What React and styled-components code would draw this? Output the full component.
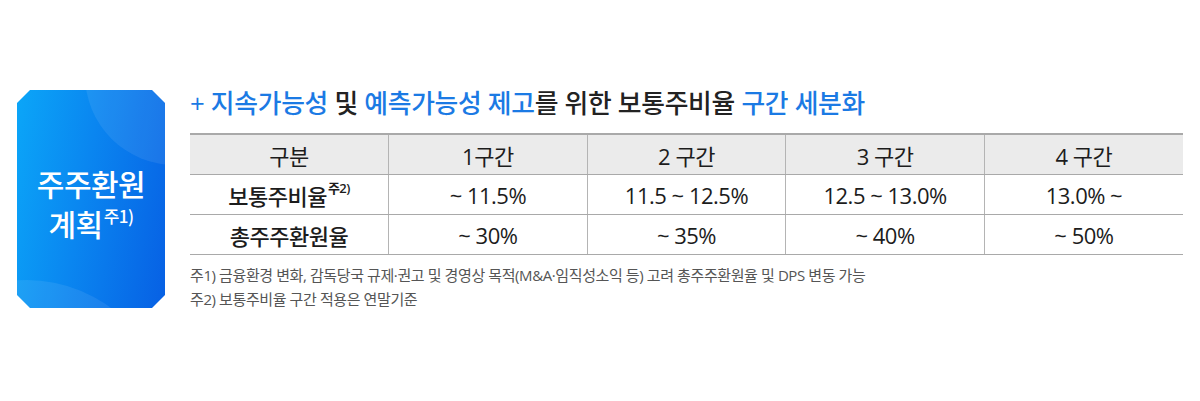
import React from "react";
import styled, { createGlobalStyle } from "styled-components";

const GlobalStyle = createGlobalStyle`
  body {
    margin: 0;
    background: #ffffff;
    font-family: "Open Sans", "Noto Sans CJK KR", sans-serif;
  }
`;

const Page = styled.div`
  width: 1200px;
  height: 401px;
  display: flex;
  align-items: flex-start;
  gap: 25px;
  padding: 88px 0 0 17px;
  box-sizing: border-box;
`;

const Badge = styled.div`
  position: relative;
  overflow: hidden;
  width: 148px;
  height: 218px;
  margin-top: 2px;
  flex-shrink: 0;
  display: flex;
  flex-direction: column;
  align-items: center;
  justify-content: center;
  padding-top: 8px;
  box-sizing: border-box;
  background: linear-gradient(100deg, #0ba6f8 0%, #0a86f0 45%, #0760e4 100%);
  clip-path: polygon(13px 0, calc(100% - 13px) 0, 100% 13px, 100% calc(100% - 13px), calc(100% - 13px) 100%, 13px 100%, 0 calc(100% - 13px), 0 13px);
  color: #fff;

  &::before {
    content: "";
    position: absolute;
    width: 180px;
    height: 180px;
    border-radius: 50%;
    left: 68px;
    top: -105px;
    background: rgba(255, 255, 255, 0.08);
  }

  &::after {
    content: "";
    position: absolute;
    width: 280px;
    height: 280px;
    border-radius: 50%;
    left: -130px;
    top: 190px;
    background: rgba(255, 255, 255, 0.08);
  }
`;

const BadgeLine = styled.div`
  position: relative;
  z-index: 1;
  font-family: "Noto Sans CJK KR", sans-serif;
  font-size: 30px;
  font-weight: 500;
  line-height: 40px;
  letter-spacing: -0.5px;
  white-space: nowrap;
`;

const Sup = styled.span`
  display: inline-block;
  font-size: ${(p) => p.$size}px;
  font-weight: ${(p) => p.$weight || 500};
  line-height: ${(p) => p.$size}px;
  vertical-align: top;
  position: relative;
  top: ${(p) => p.$lift}px;
  margin-left: 1px;
  letter-spacing: -0.5px;
`;

const Panel = styled.div`
  display: flex;
  flex-direction: column;
  width: 993px;
`;

const Title = styled.h2`
  margin: 0;
  height: 30px;
  line-height: 30px;
  font-size: 25.8px;
  font-weight: 500;
  color: #222;
  letter-spacing: -0.3px;
  white-space: nowrap;
`;

const Blue = styled.span`
  color: #1b7ae4;
`;

const Table = styled.table`
  margin-top: 15px;
  width: 100%;
  border-collapse: collapse;
  table-layout: fixed;
  border-top: 2px solid #a9a9a9;
`;

const Cell = styled.td`
  height: 39px;
  padding: 0;
  text-align: center;
  vertical-align: middle;
  font-size: 22px;
  font-weight: ${(p) => (p.$label ? 500 : 400)};
  color: #1c1c1c;
  background: ${(p) => (p.$head ? "#ebebeb" : "#fff")};
  border-bottom: 1px solid #a9a9a9;
  border-left: 1px solid #b4b4b4;
  letter-spacing: -0.5px;
  white-space: nowrap;

  &:first-child {
    border-left: none;
  }
`;

const Notes = styled.div`
  margin-top: 8px;
  font-size: 15px;
  line-height: 24px;
  color: #555;
  letter-spacing: -0.4px;
`;

const rows = [
  { label: "보통주비율", note: "주2)", values: ["~ 11.5%", "11.5 ~ 12.5%", "12.5 ~ 13.0%", "13.0% ~"] },
  { label: "총주주환원율", values: ["~ 30%", "~ 35%", "~ 40%", "~ 50%"] },
];

const heads = ["1구간", "2 구간", "3 구간", "4 구간"];

export default function App() {
  return (
    <>
      <GlobalStyle />
      <Page>
        <Badge>
          <BadgeLine>주주환원</BadgeLine>
          <BadgeLine>
            계획
            <Sup $size={17} $lift={4}>주1)</Sup>
          </BadgeLine>
        </Badge>
        <Panel>
          <Title>
            <Blue>+ 지속가능성</Blue> 및 <Blue>예측가능성 제고</Blue>를 위한 보통주비율{" "}
            <Blue>구간 세분화</Blue>
          </Title>
          <Table>
            <tbody>
              <tr>
                <Cell $head>구분</Cell>
                {heads.map((h) => (
                  <Cell $head key={h}>
                    {h}
                  </Cell>
                ))}
              </tr>
              {rows.map((r) => (
                <tr key={r.label}>
                  <Cell $label>
                    {r.label}
                    {r.note && (
                      <Sup $size={13} $lift={3} $weight={600}>
                        {r.note}
                      </Sup>
                    )}
                  </Cell>
                  {r.values.map((v) => (
                    <Cell key={v}>{v}</Cell>
                  ))}
                </tr>
              ))}
            </tbody>
          </Table>
          <Notes>
            <div>
              주1) 금융환경 변화, 감독당국 규제·권고 및 경영상 목적(M&A·임직성소익 등) 고려 총주주환원율 및 DPS 변동 가능
            </div>
            <div>주2) 보통주비율 구간 적용은 연말기준</div>
          </Notes>
        </Panel>
      </Page>
    </>
  );
}
